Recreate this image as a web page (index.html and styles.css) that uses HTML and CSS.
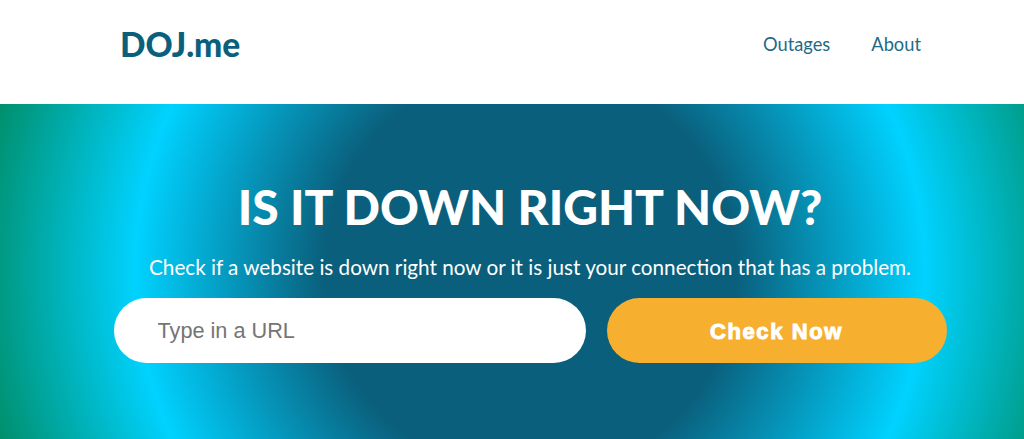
FILE: index.html
```html
<!DOCTYPE html>
<html lang="en">
<head>
<meta charset="utf-8">
<title>DOJ.me</title>
<link rel="stylesheet" href="styles.css">
</head>
<body>
<div class="page">
<header class="topbar">
  <a class="logo" href="#">DOJ.me</a>
  <nav class="nav">
    <a href="#">Outages</a>
    <a href="#">About</a>
  </nav>
</header>
<section class="hero">
  <h1>IS IT DOWN RIGHT NOW?</h1>
  <p>Check if a website is down right now or it is just your connection that has a problem.</p>
  <form class="check">
    <input class="url" type="text" placeholder="Type in a URL">
    <button class="go" type="button">Check Now</button>
  </form>
</section>
</div>
</body>
</html>
```
FILE: styles.css
```css
* { box-sizing: border-box; }
html, body { margin: 0; height: 100%; overflow: hidden; background: #fff; }
body { font-family: Lato, "Noto Sans", sans-serif; }
.page { width: 1060px; }
.topbar {
  height: 104px;
  display: flex;
  align-items: center;
  justify-content: space-between;
  padding: 0 139px 17px 120px;
  background: #fff;
}
.logo {
  color: #0a5f7c;
  font-size: 33.5px;
  font-weight: 900;
  text-decoration: none;
}
.nav { display: flex; gap: 41px; padding-top: 1px; }
.nav a { color: #1f6a88; font-size: 18.3px; text-decoration: none; }
.hero {
  height: 335px;
  display: flex;
  flex-direction: column;
  align-items: center;
  padding-top: 75px;
  color: #fff;
  background: radial-gradient(circle, #0a5f7c 37%, #00d2ff 71%, #008f6c 100%);
}
.hero h1 {
  margin: 0;
  font-size: 48px;
  line-height: 56px;
  font-weight: 900;
}
.hero p {
  margin: 15px 0 0;
  font-size: 20.7px;
  line-height: 34px;
}
.check {
  display: flex;
  gap: 21px;
  width: 833px;
  margin: 14px 0 0;
}
.url {
  width: 472px;
  height: 65px;
  border: 0;
  border-radius: 33px;
  padding: 0 44px;
  background: #fff;
  font: 21.7px "Liberation Sans", Arial, sans-serif;
  outline: none;
}
.url::placeholder { color: #757575; opacity: 1; }
.go {
  width: 340px;
  height: 65px;
  border: 0;
  border-radius: 33px;
  padding: 2px 0 0;
  background: #f6af2f;
  color: #fff;
  font: 700 22px "Liberation Sans", Arial, sans-serif;
  -webkit-text-stroke: 1px #fff;
  letter-spacing: 1.6px;
}
```
